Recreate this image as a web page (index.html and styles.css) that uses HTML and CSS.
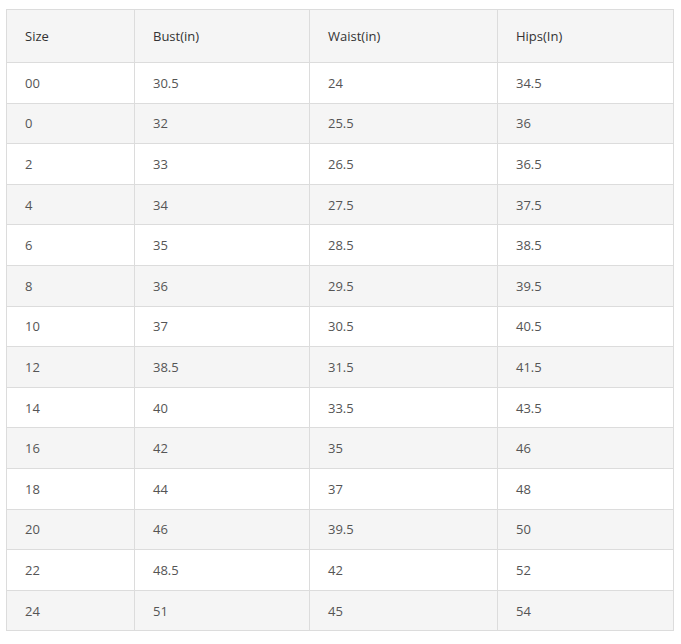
FILE: index.html
```html
<!DOCTYPE html>
<html>
<head>
<meta charset="utf-8">
<link rel="stylesheet" href="styles.css">
</head>
<body>
<table class="size-table">
  <colgroup>
    <col class="c1"><col class="c2"><col class="c3"><col class="c4">
  </colgroup>
  <thead>
    <tr><th>Size</th><th>Bust(in)</th><th>Waist(in)</th><th>Hips(In)</th></tr>
  </thead>
  <tbody>
    <tr><td>00</td><td>30.5</td><td>24</td><td>34.5</td></tr>
    <tr><td>0</td><td>32</td><td>25.5</td><td>36</td></tr>
    <tr><td>2</td><td>33</td><td>26.5</td><td>36.5</td></tr>
    <tr><td>4</td><td>34</td><td>27.5</td><td>37.5</td></tr>
    <tr><td>6</td><td>35</td><td>28.5</td><td>38.5</td></tr>
    <tr><td>8</td><td>36</td><td>29.5</td><td>39.5</td></tr>
    <tr><td>10</td><td>37</td><td>30.5</td><td>40.5</td></tr>
    <tr><td>12</td><td>38.5</td><td>31.5</td><td>41.5</td></tr>
    <tr><td>14</td><td>40</td><td>33.5</td><td>43.5</td></tr>
    <tr><td>16</td><td>42</td><td>35</td><td>46</td></tr>
    <tr><td>18</td><td>44</td><td>37</td><td>48</td></tr>
    <tr><td>20</td><td>46</td><td>39.5</td><td>50</td></tr>
    <tr><td>22</td><td>48.5</td><td>42</td><td>52</td></tr>
    <tr><td>24</td><td>51</td><td>45</td><td>54</td></tr>
  </tbody>
</table>
</body>
</html>
```

FILE: styles.css
```css
html, body {
  margin: 0;
  padding: 0;
  background: #fff;
}
body {
  padding: 9px 0 0 6px;
  font-family: "Open Sans", "Liberation Sans", sans-serif;
}
.size-table {
  border-collapse: collapse;
  table-layout: fixed;
  width: 667px;
  font-size: 13px;
  color: #555;
}
.c1 { width: 128px; }
.c2 { width: 175px; }
.c3 { width: 188px; }
.c4 { width: 176px; }
.size-table th,
.size-table td {
  border: 1px solid #dcdcdc;
  text-align: left;
  padding: 0 0 0 18px;
  vertical-align: middle;
}
.size-table th {
  height: 52px;
  font-weight: 400;
  color: #333;
  background: #f5f5f5;
}
.size-table td {
  height: 39.6px;
}
.size-table tbody tr:nth-child(even) td {
  background: #f5f5f5;
}
```
